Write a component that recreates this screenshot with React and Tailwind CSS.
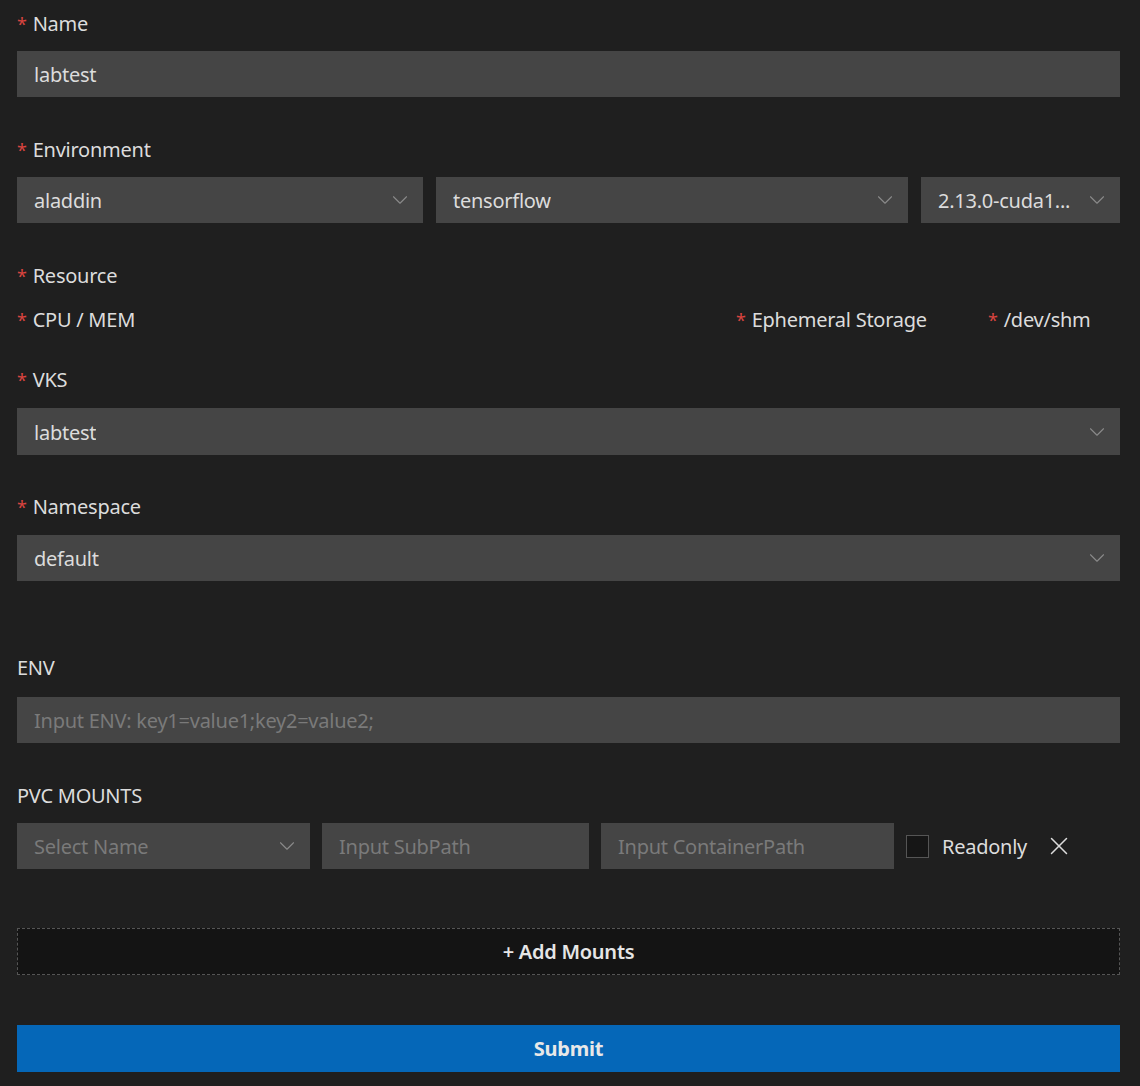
import { ChevronDown, X } from 'lucide-react';

const font = { fontFamily: '"Segoe UI", "Noto Sans", "Open Sans", sans-serif', letterSpacing: '-0.25px' };

function Label({ children, required = true, className = '' }) {
  return (
    <div className={`flex items-center h-[30px] text-[20px] text-[#dcdcdc] ${className}`}>
      {required && <span className="text-[#d9443f] mr-[6px] text-[18px] leading-none">*</span>}
      {children}
    </div>
  );
}

function Select({ value, placeholder, className = '' }) {
  return (
    <div className={`flex items-center justify-between h-[46px] bg-[#454545] pl-[17px] pr-[10px] text-[20px] ${className}`}>
      <span className={`truncate pt-[2px] ${value ? 'text-[#dcdcdc]' : 'text-[#7a7a7a]'}`}>{value || placeholder}</span>
      <ChevronDown size={26} strokeWidth={1} className="text-[#8a8a8a] shrink-0" />
    </div>
  );
}

function Input({ value, placeholder, className = '' }) {
  return (
    <div className={`flex items-center h-[46px] bg-[#454545] px-[17px] text-[20px] ${className}`}>
      <span className={`pt-[2px] ${value ? 'text-[#dcdcdc]' : 'text-[#7a7a7a]'}`}>{value || placeholder}</span>
    </div>
  );
}

export default function App() {
  return (
    <div className="min-h-[1086px] bg-[#1f1f1f] pl-[17px] pr-[20px] pt-[9px] pb-[14px]" style={font}>
      <Label>Name</Label>
      <Input value="labtest" className="mt-[12px]" />

      <Label className="mt-[38px]">Environment</Label>
      <div className="flex gap-[13px] mt-[12px]">
        <Select value="aladdin" className="w-[406px]" />
        <Select value="tensorflow" className="w-[472px]" />
        <Select value="2.13.0-cuda1..." className="flex-1" />
      </div>

      <Label className="mt-[38px]">Resource</Label>
      <div className="flex items-center mt-[14px]">
        <Label className="flex-1">CPU / MEM</Label>
        <Label className="w-[252px]">Ephemeral Storage</Label>
        <Label className="w-[132px]">/dev/shm</Label>
      </div>

      <Label className="mt-[30px]">VKS</Label>
      <Select value="labtest" className="mt-[13px] h-[47px]" />

      <Label className="mt-[37px]">Namespace</Label>
      <Select value="default" className="mt-[13px]" />

      <Label required={false} className="mt-[72px]">ENV</Label>
      <Input placeholder="Input ENV: key1=value1;key2=value2;" className="mt-[14px]" />

      <Label required={false} className="mt-[38px]">PVC MOUNTS</Label>
      <div className="flex items-center mt-[12px]">
        <Select placeholder="Select Name" className="w-[293px]" />
        <Input placeholder="Input SubPath" className="w-[267px] ml-[12px]" />
        <Input placeholder="Input ContainerPath" className="w-[293px] ml-[12px]" />
        <div className="w-[23px] h-[23px] ml-[12px] bg-[#161616] border border-[#555]" />
        <span className="ml-[13px] text-[20px] text-[#dcdcdc] pt-[2px]">Readonly</span>
        <X size={30} strokeWidth={1.2} className="ml-[17px] text-[#dcdcdc]" />
      </div>

      <div className="mt-[59px] h-[47px] flex items-center justify-center bg-[#141414] border border-dashed border-[#555] text-[20px] font-semibold text-[#e6e6e6]">
        + Add Mounts
      </div>

      <div className="mt-[50px] h-[47px] flex items-center justify-center bg-[#0567b8] text-[20px] font-bold text-[#e8e8e8]">
        Submit
      </div>
    </div>
  );
}
